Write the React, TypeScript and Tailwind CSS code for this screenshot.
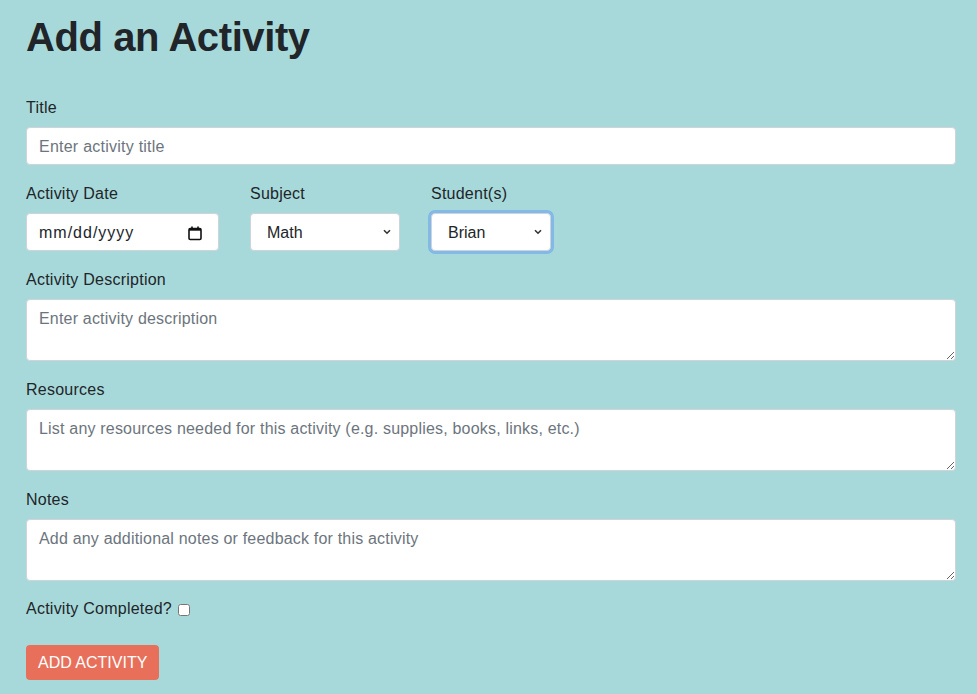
import { useState } from "react";

const font = { fontFamily: '"Liberation Sans", Arial, sans-serif' };

export default function App() {
  const [done, setDone] = useState(false);

  const ctl =
    "w-full h-[38px] bg-white rounded-[4px] border border-[#ced4da] px-3 pt-px text-[16px] tracking-[0.015em] text-[#212529] placeholder:text-[#6c757d] focus:outline-none";
  const area =
    "block w-full h-[62px] bg-white rounded-[4px] border border-[#ced4da] px-3 pt-[7px] pb-[5px] text-[16px] tracking-[0.012em] leading-6 text-[#212529] placeholder:text-[#6c757d] focus:outline-none";

  return (
    <div
      className="min-h-[694px] bg-[#a8d9da] pl-[26px] pr-[21px] pt-3 text-[#212529]"
      style={font}
    >
      <h1 className="text-[40px] leading-[1.25] tracking-[-0.01em] font-bold mb-[33px]">
        Add an Activity
      </h1>

      <form onSubmit={(e) => e.preventDefault()}>
        <div className="mb-4">
          <Label>Title</Label>
          <input className={ctl} placeholder="Enter activity title" />
        </div>

        <div className="flex gap-[31px] mb-4">
          <div>
            <Label>Activity Date</Label>
            <div className="w-[193px] h-[38px] bg-white rounded-[4px] border border-[#ced4da] pl-3 pr-[15px] pt-px flex items-center justify-between">
              <span className="text-[16px] tracking-[1px] text-[#212529]">mm/dd/yyyy</span>
              <svg width="16" height="16" viewBox="0 0 16 16" fill="none">
                <rect x="2" y="3.5" width="12" height="11" rx="1.2" stroke="#111" strokeWidth="1.6" />
                <rect x="2" y="3.5" width="12" height="2.2" fill="#111" />
                <path d="M5 1.5v3M11 1.5v3" stroke="#111" strokeWidth="1.6" />
              </svg>
            </div>
          </div>
          <div>
            <Label>Subject</Label>
            <Select w="w-[150px]" value="Math" options={["Math", "Science", "Reading", "History", "Art"]} />
          </div>
          <div>
            <Label>Student(s)</Label>
            <Select w="w-[120px]" value="Brian" focused options={["Brian", "Emma", "Liam"]} />
          </div>
        </div>

        <div className="mb-4">
          <Label>Activity Description</Label>
          <textarea rows={2} className={area} placeholder="Enter activity description" />
        </div>

        <div className="mb-4">
          <Label>Resources</Label>
          <textarea
            rows={2}
            className={area}
            placeholder="List any resources needed for this activity (e.g. supplies, books, links, etc.)"
          />
        </div>

        <div className="mb-4">
          <Label>Notes</Label>
          <textarea
            rows={2}
            className={area}
            placeholder="Add any additional notes or feedback for this activity"
          />
        </div>

        <div className="flex items-center h-6 mt-[2px] mb-[24px] text-[16px] tracking-[0.015em]">
          <span>Activity Completed?</span>
          <input
            type="checkbox"
            checked={done}
            onChange={(e) => setDone(e.target.checked)}
            className="ml-[6px] w-[12px] h-[12px] mt-[1px]"
          />
        </div>

        <button
          type="submit"
          className="h-[35px] px-3 rounded-[4px] bg-[#e8705b] text-white text-[16px] uppercase"
        >
          Add Activity
        </button>
      </form>
    </div>
  );
}

function Label({ children }: { children: React.ReactNode }) {
  return (
    <label className="block text-[16px] leading-6 tracking-[0.015em] pt-px mb-[7px]">
      {children}
    </label>
  );
}

function Select({
  w,
  value,
  options,
  focused,
}: {
  w: string;
  value: string;
  options: string[];
  focused?: boolean;
}) {
  const [v, setV] = useState(value);
  return (
    <div className={`relative ${w}`}>
      <select
        value={v}
        onChange={(e) => setV(e.target.value)}
        className={`appearance-none w-full h-[38px] bg-white rounded-[4px] border border-[#ced4da] pl-4 pr-6 pt-px text-[16px] text-[#212529] focus:outline-none ${
          focused ? "ring-[3px] ring-[#82b9e6]" : ""
        }`}
      >
        {options.map((o) => (
          <option key={o}>{o}</option>
        ))}
      </select>
      <svg
        className="absolute right-[9px] top-[16px] pointer-events-none"
        width="8"
        height="6"
        viewBox="0 0 8 6"
        fill="none"
      >
        <path d="M1 1.2l3 3 3-3" stroke="#333" strokeWidth="1.6" />
      </svg>
    </div>
  );
}
